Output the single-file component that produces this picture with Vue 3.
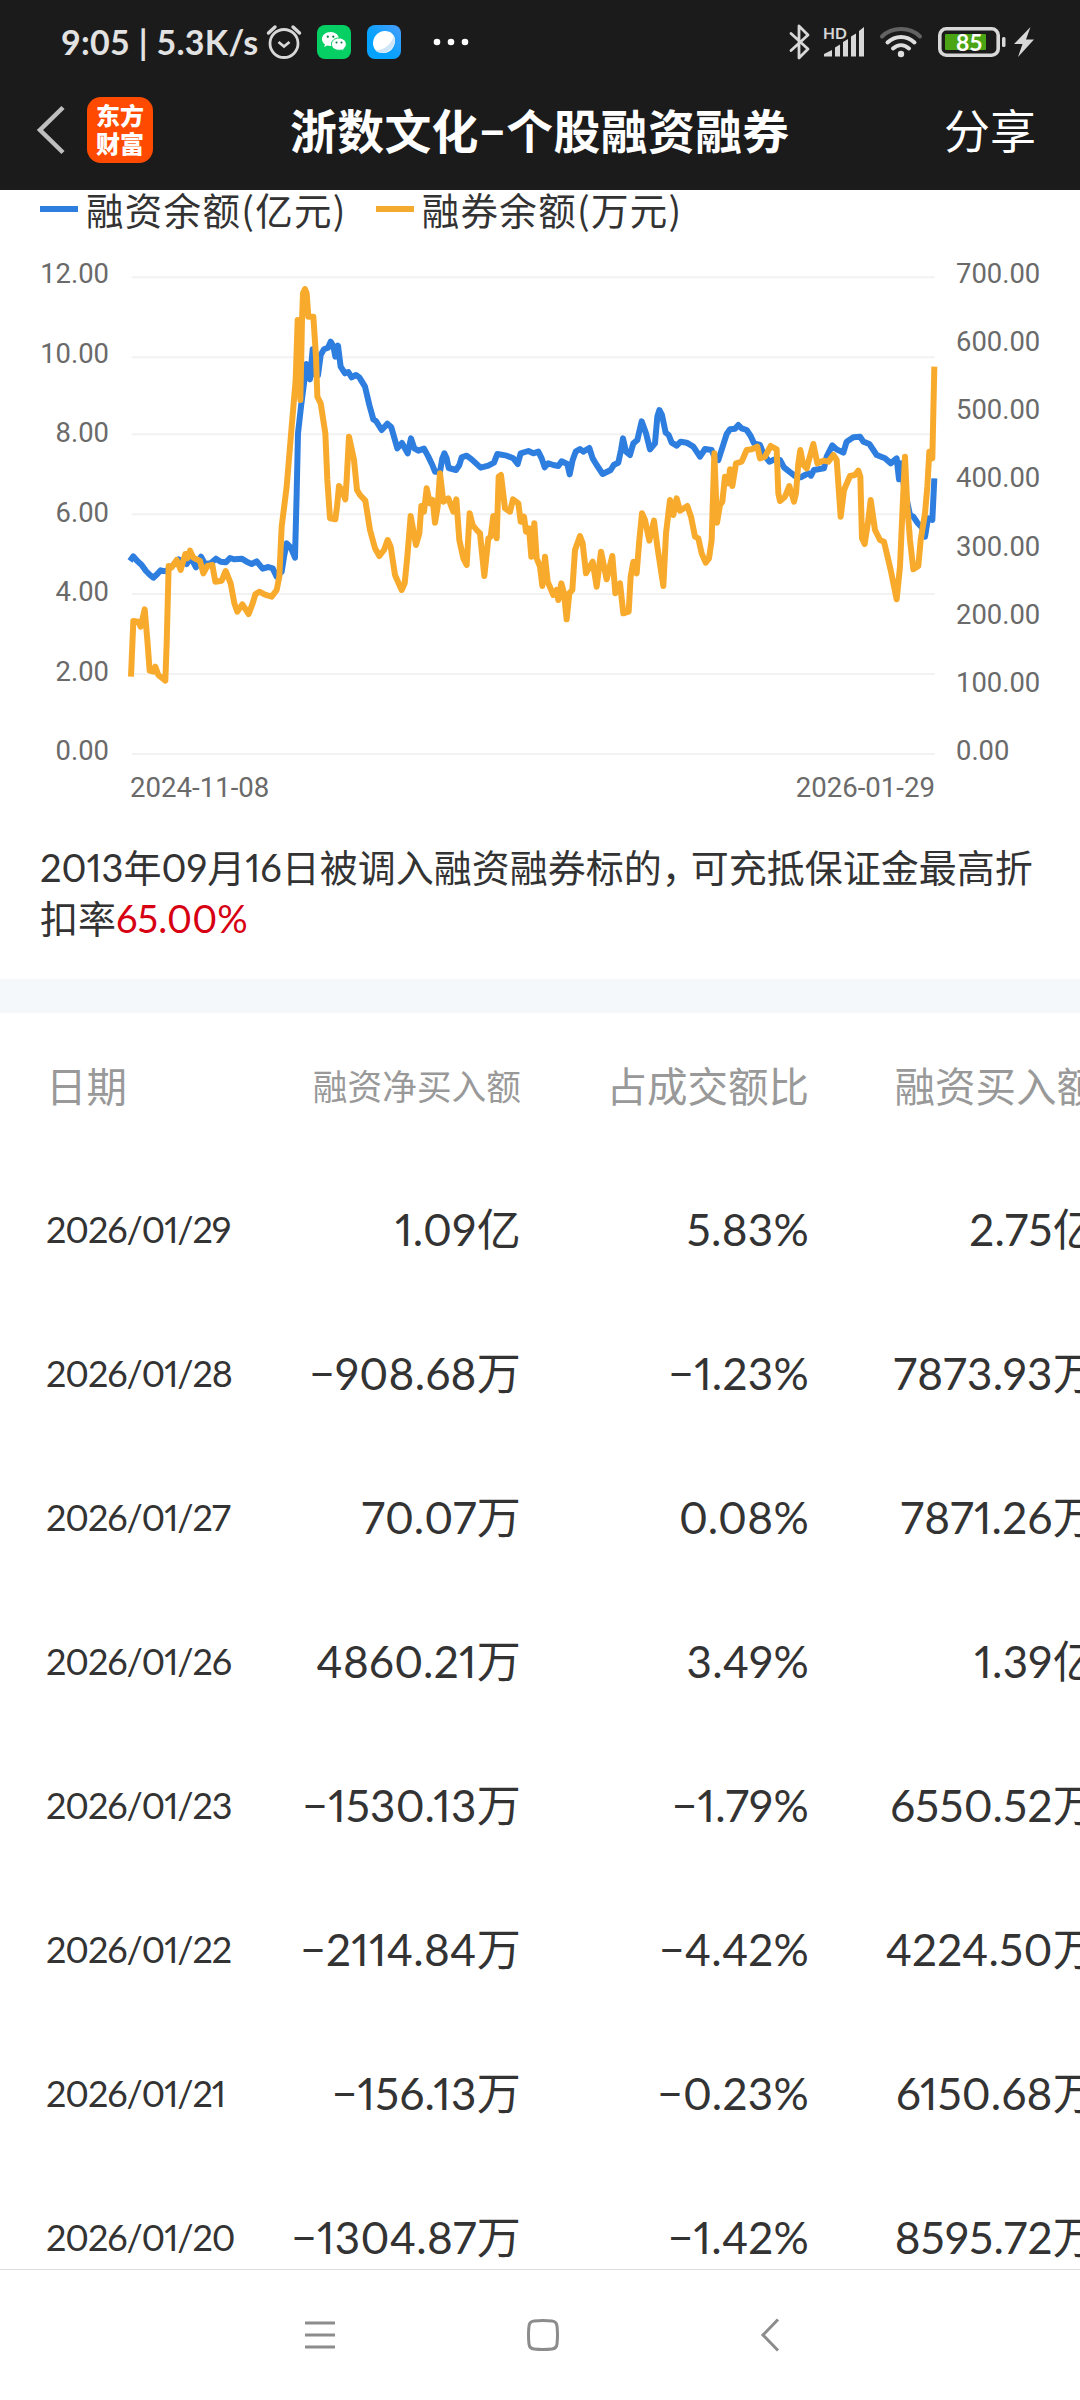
<template>
  <div class="screen">
    <header class="top">
      <div class="status-bar">
        <div class="status-left">
          <span class="status-time">9:05 | 5.3K/s</span>
          <svg class="icon-alarm" width="36" height="36" viewBox="0 0 36 36" fill="none" stroke="#d8d8d8">
            <circle cx="18" cy="19.5" r="14" stroke-width="2.8" />
            <path d="M12.500 18L18 22.500l5.500-4.500" stroke-width="2.800" />
            <path d="M2.500 9L9 3M27 3L33.500 9" stroke-width="3.400" stroke-linecap="round" />
          </svg>
          <svg class="icon-wechat" width="34" height="34" viewBox="0 0 34 34">
            <rect width="34" height="34" rx="8" fill="#06cf63" />
            <path d="M13.500 7C8.600 7 5 10 5 14c0 2.300 1.200 4.200 3 5.500l-.8 2.500 3-1.500c1 .3 2.100.5 3.300.5 4.800 0 8.500-3 8.500-7s-3.700-7-8.500-7z" fill="#fff" />
            <path d="M22 13c-4.300 0-7.500 2.700-7.500 6.200s3.200 6.100 7.500 6.100c1 0 1.900-.1 2.800-.4l2.500 1.300-.7-2.200c1.700-1.200 2.700-2.900 2.700-4.800 0-3.500-3.200-6.200-7.300-6.200z" fill="#fff" stroke="#06cf63" stroke-width="1" />
            <g fill="#087a40">
              <circle cx="10.800" cy="11.700" r="1.100" />
              <circle cx="16.300" cy="11.700" r="1.100" />
              <circle cx="19.500" cy="17.500" r="1" />
              <circle cx="24.500" cy="17.500" r="1" />
            </g>
          </svg>
          <svg class="icon-blue" width="34" height="34" viewBox="0 0 34 34">
            <defs>
              <linearGradient id="blueBg" x1="1" y1="0" x2="0" y2="1">
                <stop offset="0" stop-color="#4b9dfc" />
                <stop offset="0.600" stop-color="#05a2ff" />
              </linearGradient>
            </defs>
            <rect width="34" height="34" rx="8" fill="url(#blueBg)" />
            <path d="M18 6c6 0 10 4.200 10 9.500S24.500 28 16.500 28C9.500 28 6 24 6 18S11 6 18 6z" fill="#fff" />
            <path d="M27 11c3 8-2 16-12 17-3 0-5-1-6.500-2.500C18 25 24 19 27 11z" fill="#cfe5f8" />
          </svg>
          <svg class="icon-dots" width="36" height="8" viewBox="0 0 36 8" fill="#fff">
            <circle cx="4" cy="4" r="3.300" />
            <circle cx="18" cy="4" r="3.300" />
            <circle cx="32" cy="4" r="3.300" />
          </svg>
        </div>
        <div class="status-right">
          <svg width="22" height="36" viewBox="0 0 22 36" fill="none" stroke="#d8d8d8" stroke-width="2.800" stroke-linejoin="round" stroke-linecap="round">
            <path d="M2 9.500l17 15.500-9 9V2l9 9L2 26.500" />
          </svg>
          <svg class="icon-signal" width="42" height="34" viewBox="0 0 42 34" fill="#d8d8d8">
            <text x="0" y="13.500" class="hd">HD</text>
            <path d="M1 31.500v-2.500l8-4v6.500zM12 22.500l5-3v12h-5zM20 17l5-3v17.500h-5zM28 11.500l5-3v23h-5zM36 6l5-4v29.500h-5z" />
          </svg>
          <svg class="icon-wifi" width="44" height="34" viewBox="0 0 44 34" fill="none" stroke="#dedede" stroke-width="4" stroke-linecap="round">
            <path d="M3 11.500C13 1.500 31 1.500 41 11.500" stroke="#626262" />
            <path d="M8.500 17.500c8-7.500 19-7.500 27 0" />
            <path d="M14 23.500c5-4.500 11-4.500 16 0" />
            <circle cx="22" cy="29" r="3.200" fill="#dedede" stroke="none" />
          </svg>
          <svg class="icon-battery" width="68" height="30" viewBox="0 0 68 30">
            <rect x="1.800" y="1.800" width="58.400" height="26.400" rx="6.500" fill="none" stroke="#d8d8d8" stroke-width="3.600" />
            <rect x="7" y="7" width="41" height="16" rx="1" fill="#4aa414" />
            <rect x="64" y="10" width="3.500" height="10" rx="1.500" fill="#d8d8d8" />
            <text x="18" y="23.500" class="charge">85</text>
          </svg>
          <svg class="icon-bolt" width="20" height="30" viewBox="0 0 20 30" fill="#d8d8d8">
            <path d="M16.500 0L0 17h8.500L4 30 20 12.500h-8z" />
          </svg>
        </div>
      </div>
      <div class="nav-bar">
        <svg class="back" width="30" height="50" viewBox="0 0 30 50" fill="none" stroke="#bfbfbf" stroke-width="4.500">
          <path d="M27 2.500L4 25l23 22.500" />
        </svg>
        <div class="logo">
          <span>东方</span>
          <span>财富</span>
        </div>
        <h1 class="title">浙数文化<span class="dash">−</span>个股融资融券</h1>
        <span class="share">分享</span>
      </div>
    </header>

    <section class="legend">
      <span v-for="item in legend" :key="item.label" class="legend-item">
        <i class="swatch" :class="item.type" />{{ item.label }}
      </span>
    </section>

    <section class="chart">
      <div class="axis axis-left">
        <span v-for="v in leftAxis" :key="v">{{ v }}</span>
      </div>
      <!-- 三个绘图单位对应一个像素 -->
      <svg class="plot" width="820" height="507" viewBox="60 -3 2460 1521">
        <line v-for="y in gridLines" :key="y" x1="95" x2="2504" :y1="y" :y2="y" class="grid-line" />
        <polyline :points="marginLine" class="line line-margin" />
        <polyline :points="shortLine" class="line line-short" />
      </svg>
      <div class="axis axis-right">
        <span v-for="v in rightAxis" :key="v">{{ v }}</span>
      </div>
    </section>
    <div class="chart-dates">
      <span>2024-11-08</span>
      <span>2026-01-29</span>
    </div>

    <p class="desc">2013年09月16日被调入融资融券标的<span class="comma">，</span>可充抵保证金最高折扣率<span class="rate">65.00%</span></p>

    <div class="divider" />

    <section class="table">
      <div class="row head">
        <span class="col-date">日期</span>
        <span class="small">融资净买入额</span>
        <span>占成交额比</span>
        <span>融资买入额</span>
      </div>
      <div v-for="row in rows" :key="row[0]" class="row">
        <span class="col-date">{{ row[0] }}</span>
        <span>{{ row[1] }}</span>
        <span>{{ row[2] }}</span>
        <span>{{ row[3] }}</span>
      </div>
    </section>

    <footer class="system-nav">
      <svg width="30" height="32" viewBox="0 0 30 32" stroke="#8c8c8c" stroke-width="3">
        <path d="M0 4h30M0 16h30M0 28h30" />
      </svg>
      <svg class="home" width="32" height="32" viewBox="0 0 32 32" fill="none" stroke="#8c8c8c" stroke-width="3">
        <path d="M7 2Q16 1 25 2Q29.500 2.500 30 7Q31 16 30 25Q29.500 29.500 25 30Q16 31 7 30Q2.500 29.500 2 25Q1 16 2 7Q2.500 2.500 7 2z" />
      </svg>
      <svg width="20" height="34" viewBox="0 0 20 34" fill="none" stroke="#8c8c8c" stroke-width="3">
        <path d="M18 1.500L3 17l15 15.500" />
      </svg>
    </footer>
  </div>
</template>

<script setup>
const legend = [
  { label: '融资余额(亿元)', type: 'margin' },
  { label: '融券余额(万元)', type: 'short' }
]

const leftAxis = ['12.00', '10.00', '8.00', '6.00', '4.00', '2.00', '0.00']
const rightAxis = ['700.00', '600.00', '500.00', '400.00', '300.00', '200.00', '100.00', '0.00']
const gridLines = [52, 292, 523, 763, 1002, 1242, 1482]

// 每段走势的坐标以该段起点为原点
const joinSegments = (segments) =>
  segments
    .flatMap(({ dx, dy, points }) =>
      points.split(' ').map((p) => {
        const [x, y] = p.split(',').map(Number)
        return `${x + dx},${y + dy}`
      })
    )
    .join(' ')

const marginLine = joinSegments([
  {
    dx: 0,
    dy: 0,
    points:
      '90,903 100,889 112,903 125,915 138,933 150,945 160,953 172,942 182,931 198,934 220,915 236,898 250,905 260,912 272,892 288,922 303,890 315,912 332,910 348,896 362,905 378,907 390,894 403,898 425,896 440,905 455,912 470,904 488,926 505,921 518,925 530,950 545,935 552,890 560,850 572,862 585,893 590,700 594,520 603,440 612,370 619,312 630,358 638,268 646,345 654,346 662,285 672,268 684,263 692,245 700,258 706,290 714,257 722,320 735,340 745,336 755,352 768,345 778,352 795,380 808,435 820,478 828,483 845,510 862,491 874,502 892,565 906,549'
  },
  {
    dx: 900,
    dy: 120,
    points:
      '23,460 33,415 43,445 55,452 72,446 85,470 97,495 105,515 120,515 127,475 133,460 140,475 146,504 168,510 178,495 185,472 200,467 215,478 242,503 265,497 282,488 292,462 320,467 340,475 353,492 362,460 385,453 400,460 415,455 425,475 434,502 445,490 460,495 475,498 485,484 502,492 509,523 518,480 527,455 540,447 550,455 568,444 578,475 590,495 608,522 632,510 642,494 655,488 663,450 669,415 678,455 690,465 700,430 712,420 725,364 738,400 750,448 765,430 772,350 778,330 786,345 797,398 806,405 815,428 830,437'
  },
  {
    dx: 1740,
    dy: 240,
    points:
      '2,305 20,308 40,320 60,350 75,327 95,330 103,350 115,360 128,320 140,282 150,268 165,266 175,255 185,265 200,270 212,288 222,310 240,315 252,345 268,365 285,358 300,360 312,382 328,395 345,408 362,412 375,405 385,400 393,407 402,390 432,385 440,350 457,316 470,328 490,338 500,305 520,292 540,290 550,305 568,312 590,345 615,355 632,370 650,355 657,418 663,370 672,440 690,525 700,530 712,548 725,562 735,590 744,535 757,540 763,415'
  }
])

const shortLine = joinSegments([
  {
    dx: 0,
    dy: 0,
    points:
      '93,1250 100,1083 115,1085 122,1100 134,1048 142,1140 149,1232 160,1235 166,1220 175,1245 196,1262 200,1150 206,918 215,922 230,900 242,930 256,882 262,895 270,872 280,893 300,903 310,940 322,918 337,915 346,965 365,962 377,933 392,970 403,1030 412,1055 427,1033 446,1062 458,1030 466,1003 478,995 495,1004 515,1010 530,990 538,950 545,800 560,680 575,500 587,360 593,180 601,420 606,180 609,100 615,87 620,100 625,170 640,170 648,290 652,410 662,430 676,520 682,660 690,775 706,778 711,740 717,678 725,690 736,718 740,660 747,530 762,600 771,690 780,705 796,722 810,810 825,865 838,888 852,870 863,840 872,860 885,945 905,990'
  },
  {
    dx: 900,
    dy: 120,
    points:
      '14,850 22,770 32,648 48,735 58,700 64,618 72,635 80,565 90,610 98,600 105,668 113,620 120,520 130,605 145,595 160,635 169,598 178,720 190,775 200,795 209,640 218,675 230,690 240,700 253,828 265,715 272,710 280,648 290,715 296,530 303,525 315,625 330,635 339,598 355,610 362,665 372,650 378,695 387,685 394,770 403,670 410,775 420,800 427,858 435,770 443,845 460,885 470,870 475,900 484,850 492,880 500,958 508,880 517,870 525,750 540,708 548,730 558,820 578,785 590,860 603,755 620,838 637,768 646,880 660,850 670,940 686,935 692,830 700,785 710,820 718,720 726,640 735,660 748,722 762,662 772,740 790,858 798,700 810,600 820,645 830,595'
  },
  {
    dx: 1740,
    dy: 240,
    points:
      '0,512 22,498 33,530 45,590 55,595 65,640 77,668 87,655 95,600 103,340 111,548 120,495 127,485 135,410 145,430 150,388 157,438 168,370 185,365 200,330 215,328 232,320 240,355 255,350 272,318 290,328 295,460 300,483 315,470 328,438 342,485 348,460 355,370 361,330 370,375 380,385 400,312 412,370 430,362 445,365 460,345 470,360 482,530 492,450 510,408 525,405 535,392 541,410 546,595 554,612 565,540 572,480 585,570 600,600 612,605 632,690 650,778 660,680 668,500 675,350 682,500 690,600 700,688 715,678 722,600 735,520 742,440 748,335 757,355 763,80'
  }
])

const rows = [
  ['2026/01/29', '1.09亿', '5.83%', '2.75亿'],
  ['2026/01/28', '−908.68万', '−1.23%', '7873.93万'],
  ['2026/01/27', '70.07万', '0.08%', '7871.26万'],
  ['2026/01/26', '4860.21万', '3.49%', '1.39亿'],
  ['2026/01/23', '−1530.13万', '−1.79%', '6550.52万'],
  ['2026/01/22', '−2114.84万', '−4.42%', '4224.50万'],
  ['2026/01/21', '−156.13万', '−0.23%', '6150.68万'],
  ['2026/01/20', '−1304.87万', '−1.42%', '8595.72万']
]
</script>

<style>
body {
  background: #fff;
}
</style>

<style scoped>
.screen {
  width: 1080px;
  height: 2400px;
  overflow: hidden;
  display: flex;
  flex-direction: column;
  background: #fff;
  color: #333;
  font-family: Lato, 'Noto Sans CJK SC', sans-serif;
}

.screen svg {
  display: block;
  flex: none;
}

.top {
  height: 190px;
  flex: none;
  background: #1b1b1b;
}

/* 状态栏 */
.status-bar {
  display: flex;
  justify-content: space-between;
  align-items: center;
  height: 84px;
  box-sizing: border-box;
  padding: 0 46px 0 61px;
}

.status-left,
.status-right {
  display: flex;
  align-items: center;
}

.status-time {
  width: 199px;
  margin-right: 6px;
  font-size: 34px;
  line-height: 40px;
  font-weight: 700;
  letter-spacing: 0.3px;
  white-space: nowrap;
  color: #e2e2e2;
}

.icon-wechat {
  margin-left: 15px;
}

.icon-blue {
  margin-left: 16px;
}

.icon-dots {
  margin-left: 32px;
}

.icon-signal {
  margin-left: 12px;
  overflow: visible;
}

.icon-wifi {
  margin-left: 14px;
}

.icon-battery {
  margin-left: 15px;
}

.icon-bolt {
  margin-left: 8px;
}

.hd {
  font-size: 15.500px;
  font-weight: 700;
}

.charge {
  font-size: 23px;
  font-weight: 700;
  fill: #fff;
}

/* 标题栏 */
.nav-bar {
  display: flex;
  align-items: center;
  height: 92px;
  padding: 0 44px 0 36px;
  color: #fff;
}

.logo {
  display: flex;
  flex-direction: column;
  align-items: center;
  justify-content: center;
  width: 66px;
  height: 66px;
  margin-left: 21px;
  border-radius: 14px;
  background: #ff4a00;
  font-size: 24px;
  line-height: 28px;
  font-weight: 900;
}

.title {
  width: 510px;
  margin: 2px 0 0 137px;
  font-size: 46.800px;
  line-height: 60px;
  font-weight: 700;
  letter-spacing: 0.4px;
  white-space: nowrap;
}

.share {
  margin: 2px 0 0 auto;
  font-size: 46px;
  line-height: 60px;
}

/* 图例 */
.legend {
  display: flex;
  gap: 29px;
  height: 38px;
  flex: none;
  padding-left: 40px;
}

.legend-item {
  display: flex;
  align-items: center;
  font-family: 'Noto Sans CJK SC', sans-serif;
  font-size: 37.500px;
  line-height: 38px;
  letter-spacing: 1.300px;
}

.swatch {
  width: 38px;
  height: 6px;
  margin-right: 8px;
}

.swatch.margin {
  background: #2e7ee0;
}

.swatch.short {
  background: #f3aa2e;
}

/* 走势图 */
.chart {
  display: flex;
  height: 507px;
  flex: none;
  margin-top: 31px;
}

.axis {
  display: flex;
  flex-direction: column;
  justify-content: space-between;
  font-family: Roboto, sans-serif;
  font-size: 27.400px;
  line-height: 30px;
  color: #6a6a6a;
}

.axis-left {
  width: 109px;
  margin-right: 11px;
  text-align: right;
}

.axis-right {
  margin-left: 16px;
}

.plot {
  overflow: visible;
}

.grid-line {
  stroke: #f2f2f2;
  stroke-width: 6;
}

.line {
  fill: none;
  stroke-width: 18;
  stroke-linejoin: round;
}

.line-margin {
  stroke: #2e7ee0;
}

.line-short {
  stroke: #f8aa2d;
}

.chart-dates {
  display: flex;
  justify-content: space-between;
  flex: none;
  height: 30px;
  margin: 7px 145px 0 130px;
  font-family: Roboto, sans-serif;
  font-size: 27.600px;
  line-height: 30px;
  color: #6a6a6a;
}

.desc {
  flex: none;
  height: 137px;
  margin: 39px 36px 0 40px;
  font-size: 38px;
  line-height: 51px;
  font-variant-numeric: proportional-nums;
}

.comma {
  margin-right: -9px;
}

.rate {
  letter-spacing: 0.1px;
  color: #d70012;
}

.divider {
  flex: none;
  height: 34px;
  background: #f5f8fa;
}

/* 明细表 */
.table {
  flex: none;
  height: 1256px;
  overflow: hidden;
}

.row {
  display: grid;
  grid-template-columns: 233px 288px 288px 288px;
  align-items: center;
  width: 1098px;
  height: 144px;
  font-size: 44px;
  line-height: 60px;
  letter-spacing: 0.3px;
  font-variant-numeric: proportional-nums;
  text-align: right;
  white-space: nowrap;
}

.row .col-date {
  padding-left: 46px;
  font-size: 36px;
  letter-spacing: -1.100px;
  text-align: left;
}

.row.head {
  box-sizing: border-box;
  padding-top: 3px;
  font-size: 40.500px;
  letter-spacing: 0;
  color: #999;
}

.row.head .col-date {
  font-size: 40.500px;
  letter-spacing: 0;
}

.row.head .small {
  font-size: 34.700px;
}

/* 系统导航 */
.system-nav {
  flex: 1;
  display: grid;
  grid-template-columns: 222px 233px 20px;
  align-items: center;
  padding-left: 305px;
  border-top: 1px solid #dedede;
  background: #fff;
}
</style>
